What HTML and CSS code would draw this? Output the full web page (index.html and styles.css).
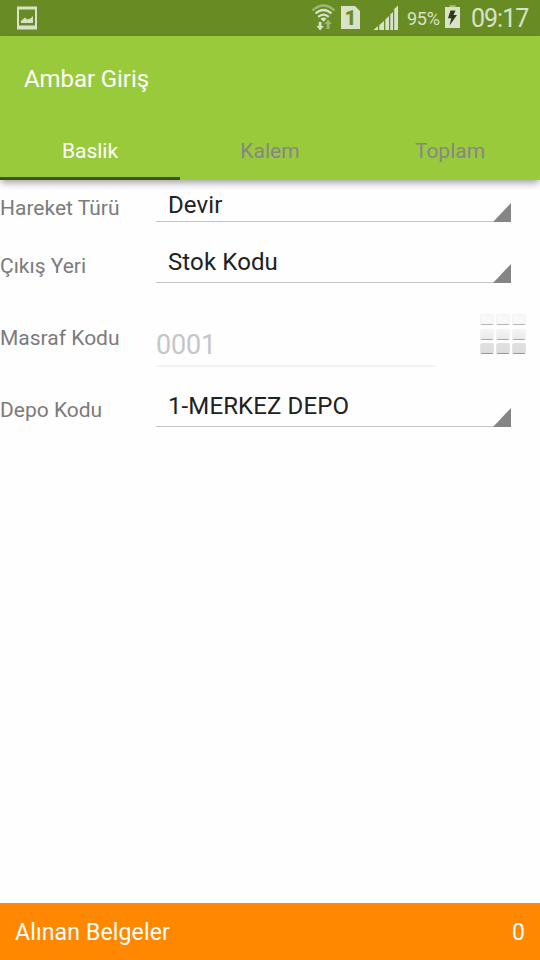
FILE: index.html
```html
<!DOCTYPE html>
<html lang="tr">
<head>
<meta charset="utf-8">
<title>Ambar Giriş</title>
<link rel="stylesheet" href="styles.css">
</head>
<body>
<div class="status">
  <svg class="shot" width="20" height="24" viewBox="0 0 20 24"><path fill="#d8e2c8" fill-rule="evenodd" d="M0 .5h20v23H0zM2 3.500v16h16v-16z"/><path fill="#d8e2c8" d="M4 17v-2l4-3.500 2 2 3.500-1L16 10v7z"/></svg>
  <div class="tray">
    <svg class="wifi" width="26" height="28" viewBox="0 0 26 28" fill="none"><path d="M1.500 6.500Q12.500-3.500 23.500 6.500" stroke="#9eb776" stroke-width="2.200"/><path d="M4.500 9.500Q12.500 2.500 20.500 9.500M7.200 12.800Q12.500 8.300 17.800 12.800" stroke="#d8e2c8" stroke-width="2.200"/><path fill="#d8e2c8" d="M9.500 14.800a4.500 4.500 0 0 1 6 0l-3 3zM7.700 18h2.800v4h2.300l-3.700 4.500L5.500 22h2.200z"/><path fill="#9eb776" d="M15.700 25h2.800v-5h2.300l-3.700-4.500-3.600 4.500h2.200z"/></svg>
    <div class="sim">1</div>
    <svg class="signal" width="26" height="26" viewBox="0 0 26 26" fill="#d8e2c8"><path d="M.5 25L5 21v4zM6.300 20L11 16v9H6.300zM12.300 14.500L16 11v14h-3.700zM17.300 9.500L20 7v18h-2.700zM21.200 4L25 .5V25h-3.800z"/></svg>
    <span class="percent">95%</span>
    <svg class="battery" width="15" height="23" viewBox="0 0 15 23"><path fill="#9eb776" d="M4.500 0h6v2h-6z"/><path fill="#d8e2c8" d="M0 2h15v21H0z"/><path fill="#2c3a18" d="M5.500 5.500h5L8.500 10H12L4.500 20.500l1.800-7.300H3z"/></svg>
    <span class="clock">09:17</span>
  </div>
</div>
<header class="appbar">
  <h1>Ambar Giriş</h1>
  <nav class="tabs">
    <div class="tab active">Baslik</div>
    <div class="tab">Kalem</div>
    <div class="tab">Toplam</div>
  </nav>
</header>
<main class="form">
  <div class="row first"><label>Hareket Türü</label><div class="spinner">Devir</div></div>
  <div class="row"><label>Çıkış Yeri</label><div class="spinner">Stok Kodu</div></div>
  <div class="row"><label>Masraf Kodu</label><div class="input">0001</div>
    <div class="grid"><i></i><i></i><i></i><i class="mid"></i><i class="mid"></i><i class="mid"></i><i class="low"></i><i class="low"></i><i class="low"></i></div>
  </div>
  <div class="row"><label>Depo Kodu</label><div class="spinner">1-MERKEZ DEPO</div></div>
</main>
<footer class="footer"><span>Alınan Belgeler</span><span>0</span></footer>
</body>
</html>
```
FILE: styles.css
```css
* { box-sizing: border-box; }
body {
  margin: 0;
  height: 960px;
  display: flex;
  flex-direction: column;
  overflow: hidden;
  background: #fefefe;
  font-family: Roboto, sans-serif;
}
.status {
  height: 36px;
  flex: none;
  display: flex;
  justify-content: space-between;
  padding: 0 11px 0 17px;
  background: #688c23;
  color: #d8e2c8;
}
.shot { margin-top: 6px; }
.tray { display: flex; align-items: flex-start; }
.wifi { margin-top: 4px; }
.sim {
  width: 19px;
  height: 23px;
  margin: 6px 0 0 4px;
  background: #d8e2c8;
  clip-path: polygon(0 0, 14px 0, 100% 5px, 100% 100%, 0 100%);
  color: #688c23;
  font: 900 20px/24px Roboto, sans-serif;
  text-align: center;
}
.signal { margin: 5px 0 0 13px; }
.percent { width: 34px; margin: 0 0 0 8px; font-size: 18px; line-height: 38px; letter-spacing: -.3px; }
.battery { margin: 5px 0 0 4px; }
.clock { width: 58px; margin-left: 11px; font-size: 25px; line-height: 38px; letter-spacing: -1px; white-space: nowrap; }
.appbar {
  height: 144px;
  flex: none;
  display: flex;
  flex-direction: column;
  background: #99ca3c;
  box-shadow: 0 4px 7px -1px rgba(0, 0, 0, .36);
}
h1 { margin: 0; padding-left: 24px; height: 84px; font-size: 24px; line-height: 86px; font-weight: 400; letter-spacing: -.08px; color: #fff; }
.tabs { flex: none; height: 60px; display: flex; }
.tab { flex: 1; height: 60px; text-align: center; font-size: 21px; line-height: 63px; color: #868686; }
.active { color: #fff; box-shadow: inset 0 -3px #3d5410; }
.form { flex: 1; padding-top: 6px; }
.row { display: flex; height: 72px; }
.first { height: 44px; }
label { width: 156px; flex: none; font-size: 21px; line-height: 72px; color: #7b7b7b; }
.first label { line-height: 44px; }
.spinner {
  width: 355px;
  height: 53px;
  padding-left: 12px;
  border-bottom: 1px solid #c4c4c4;
  font-size: 24px;
  line-height: 64px;
  letter-spacing: .12px;
  color: #212121;
  display: flex;
  justify-content: space-between;
}
.spinner::after {
  content: "";
  width: 18px;
  height: 19px;
  align-self: flex-end;
  margin-bottom: -1px;
  background: #858585;
  clip-path: polygon(100% 0, 100% 100%, 0 100%);
}
.first .spinner { height: 36px; line-height: 38px; }
.input { width: 280px; height: 65px; border-bottom: 2px solid #f3f3f3; font-size: 27px; line-height: 87px; letter-spacing: -.2px; color: #c6c6c6; }
.grid { display: grid; grid-template-columns: repeat(3, 14px); grid-auto-rows: 11px; column-gap: 2px; row-gap: 3.500px; margin: 12px 0 0 44px; height: 40px; }
.grid i { border-radius: 2px; background: #f8f8f8; border: 1px solid #f3f3f3; border-bottom-color: #b4b4b4; }
.grid .mid { background: linear-gradient(#f4f4f4, #eaeaea); border-bottom-color: #aaa; }
.grid .low { background: linear-gradient(#e0e0e0, #dcdcdc); border-color: #e2e2e2; border-bottom-color: #999; }
.footer {
  height: 57px;
  flex: none;
  display: flex;
  justify-content: space-between;
  padding: 0 15px;
  background: #ff8800;
  color: #fff;
  font-size: 23px;
  letter-spacing: .15px;
  line-height: 60px;
}
```
